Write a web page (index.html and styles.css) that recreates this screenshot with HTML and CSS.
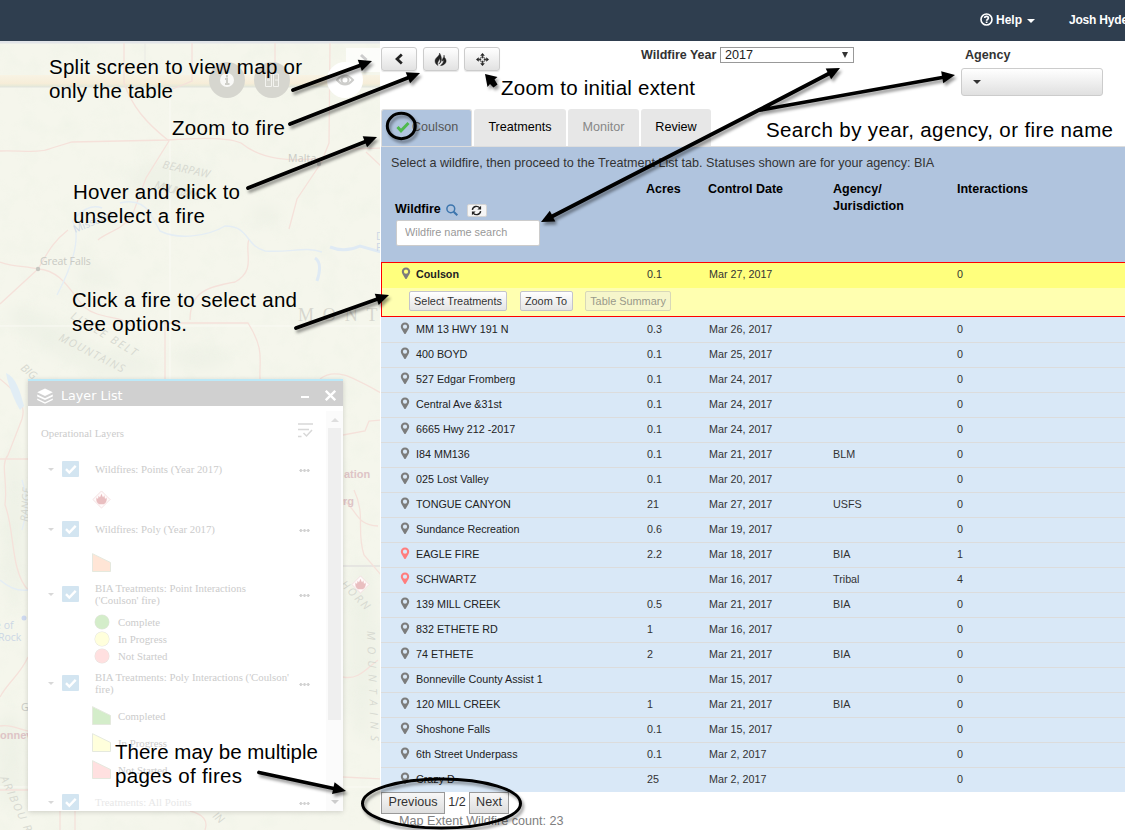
FILE: index.html
```html
<!DOCTYPE html>
<html lang="en">
<head>
<meta charset="utf-8">
<title>Wildfire Treatments</title>
<link rel="stylesheet" href="styles.css">
</head>
<body>
<svg class="defs" width="0" height="0" aria-hidden="true">
  <symbol id="pin" viewBox="0 0 10 13"><path fill="currentColor" fill-rule="evenodd" d="M5 .5C2.500.500.8 2.300.8 4.500c0 1 .300 1.700.7 2.500L4.300 11.700q.7.800 1.400 0L8.500 7c.4-.8.7-1.500.7-2.500C9.200 2.300 7.500.5 5 .5zM5 2.600a2.100 2.100 0 1 1 0 4.200 2.100 2.100 0 0 1 0-4.200z"/></symbol>
  <symbol id="check" viewBox="0 0 17 16"><rect width="17" height="16" rx="1" fill="#d3e5f1"/><path d="M4 8.200l3.300 3.300L13.700 4.900" fill="none" stroke="#fff" stroke-width="2.400"/></symbol>
  <symbol id="flame" viewBox="0 0 20 20"><path d="M10 1l9 9-9 9-9-9z" fill="#fffafa" stroke="#f3dfe0"/><path d="M7.500 15C4.500 13.500 4.200 10.500 4.800 8l1.500 1.600L7 6l1.400 2L9.900 4l1.700 4 1.400-2.500.7 4 1.600-1.500C16 11 15.200 13.500 12.500 15z" fill="#e9bec0"/></symbol>
  <symbol id="poly" viewBox="0 0 20 20"><path d="M.5.700L19.500 10v9.500H.500z" fill="currentColor" stroke="#e4e8dd"/></symbol>
</svg>

<header class="topbar">
  <a class="nav-item help">
    <svg width="13" height="13" viewBox="0 0 13 13"><circle cx="6.500" cy="6.500" r="5.500" fill="none" stroke="#fff" stroke-width="1.600"/><path d="M4.700 5.100c0-2.400 3.700-2.200 3.700 0 0 1.400-1.800 1.300-1.800 2.700M6.600 8.600v1.500" fill="none" stroke="#fff" stroke-width="1.700"/></svg>
    <span class="t-help">Help</span><i class="caret"></i>
  </a>
  <a class="nav-item user">Josh Hyde</a>
</header>

<main class="split">
  <section class="map">
    <svg class="basemap" width="381" height="789" viewBox="0 41 381 789">
      <defs>
        <filter id="relief" x="0" y="0" width="100%" height="100%"><feTurbulence type="fractalNoise" baseFrequency=".05" numOctaves="4" seed="8"/><feColorMatrix values="0 0 0 0 .82  0 0 0 0 .87  0 0 0 0 .77  0 0 2.200 0 -.95"/></filter>
        <filter id="soft"><feGaussianBlur stdDeviation="7"/></filter>
        <linearGradient id="band" x2="0" y2="1"><stop offset="0" stop-color="#f8f3e4"/><stop offset=".7" stop-color="#f6edd8"/><stop offset="1" stop-color="#e2e8d8"/></linearGradient>
      </defs>
      <rect y="41" width="381" height="789" fill="#f5f6ec"/>
      <g fill="#eff2e7" filter="url(#soft)">
        <ellipse cx="95" cy="275" rx="20" ry="9"/><ellipse cx="50" cy="335" rx="48" ry="16" transform="rotate(30 50 335)"/><ellipse cx="120" cy="365" rx="38" ry="12"/><ellipse cx="200" cy="358" rx="28" ry="12"/><ellipse cx="265" cy="215" rx="15" ry="10"/><ellipse cx="14" cy="530" rx="14" ry="80"/><ellipse cx="362" cy="650" rx="16" ry="90"/><ellipse cx="10" cy="760" rx="15" ry="50"/><ellipse cx="170" cy="180" rx="40" ry="20"/>
      </g>
      <rect y="41" width="381" height="789" filter="url(#relief)" opacity=".28"/>
      <rect y="41" width="381" height="2.500" fill="#e1e4e8"/>
      <rect y="75" width="381" height="12" fill="url(#band)"/>
      <path d="M0 87H381" stroke="#e2e4de"/>
      <path d="M145 43v32" fill="none" stroke="#e9e9e4"/>
      <g fill="none" stroke="#fafaf4"><path d="M170 87v293M0 326h381M0 787h28M343 787h38"/></g>
      <path d="M343 566h38" stroke="#dad7d9"/>
      <g fill="none" stroke="#f5e1da" stroke-width="1.300">
        <path d="M0 151C20 150 38 154 52 148L72 142 168 140C205 137 230 138 241 143 262 160 290 162 323 158L350 149 381 148"/>
        <path d="M124 43v40C132 106 145 122 169 141L146 178 132 216C122 230 105 233 98 240M275 43v34M330 43l-1 100-8 20-24 36-8 30M170 90l22-9V43M381 166l-15-14"/>
        <path d="M0 262C14 267 25 266 38 269 50 248 55 240 68 230M38 269L0 304M38 269C60 270 70 290 84 307 100 320 122 315 132 326M165 379v-56h83C265 350 259 360 260 379M190 320c0-30 20-33 45-38 22-12 9-30 14-43"/>
        <path d="M0 379C20 395 26 405 22 419L8 455c-8 10 0 25-3 50C15 530 10 570 28 590M0 459h28M28 657C20 675 8 682 0 697M0 726c12-2 20 4 28 5M320 379c15-12 32-2 61 14M343 435l22-4 4-10 12-1M343 500c15 10 12 25 35 26M354 490c12 25 2 40 10 65l17 20M343 677c15 3 22-7 35-17M343 777l38 2M0 790h28M60 811v19M75 811v19M190 811q20 5 15 19"/>
      </g>
      <g fill="none" stroke="#e4edf4" stroke-width="1.400">
        <path d="M57 295C70 270 82 240 73 222M72 222c8-12 20-18 30-14M120 203q20-5 30 10l10 18c20 10 50 4 65-5 25 0 20 20 40 25 25 2 40-5 57 1M0 580q14 12 28 10M22 480q8 25 0 50"/>
      </g>
      <path d="M330 247q15 6 30-1l21 6M315 258q8 5 2 23" fill="none" stroke="#dfeaf4" stroke-width="3"/>
      <path d="M6 373c10 4 14 18 18 33l-4 4C14 400 8 385 6 373z" fill="#e1edf5"/>
      <g class="place">
        <text x="288" y="162">Malta</text><text x="40" y="265" textLength="51">Great Falls</text>
        <text x="21" y="711">G</text>
      </g>
      <circle cx="38" cy="269" r="2.200" fill="#c6c6c0"/><circle cx="319" cy="164" r="2.200" fill="#c6c6c0"/><circle cx="24" cy="618" r="2.500" fill="#cdd8ef"/>
      <g class="range">
        <text transform="translate(162 168) rotate(12)" textLength="48">BEARPAW</text>
        <text transform="translate(154 188) rotate(16)" textLength="46">MOUNTAINS</text>
        <text transform="translate(70 318) rotate(31)" textLength="75">LITTLE BELT</text>
        <text transform="translate(58 340) rotate(27)" textLength="72">MOUNTAINS</text>
        <text transform="translate(20 369) rotate(40)">BIG</text>
        <text transform="translate(28 522) rotate(-86)" textLength="34">RANGE</text>
        <text transform="translate(340 585) rotate(45)" textLength="36">HORN</text>
        <text transform="translate(367 631) rotate(88)" textLength="110">MOUNTAINS</text>
        <text transform="translate(0 778) rotate(65)" textLength="60">ARIBOU R</text>
        <text transform="translate(212 817) rotate(40)">IN</text>
      </g>
      <text class="state" x="298" y="321" textLength="100">MONTA</text>
      <g class="water"><text transform="translate(75 233) rotate(-22)">Missouri</text><text x="376" y="240">D</text><text x="376" y="251">F</text><text x="-10" y="629">ce of</text><text x="-2" y="641">Rock</text></g>
      <g class="reservation"><text x="344" y="478">ation</text><text x="343" y="505">rg</text><text x="0" y="739">onnev</text></g>
      <use href="#flame" x="351" y="575" width="19" height="19"/>
      <g>
        <circle cx="227" cy="80" r="18" fill="#d6d6cf"/><circle cx="272" cy="80" r="18" fill="#d6d6cf"/>
        <circle cx="345" cy="80" r="18" fill="#fff"/>
        <path d="M346 48h35v24h-35z" fill="#fff" opacity=".75"/>
        <circle cx="227" cy="80" r="7" fill="#f9f9f7"/><path d="M227 75v2.500M225 79h2v5M225 84h4.500" stroke="#cfcfc9" stroke-width="2" fill="none"/>
        <path d="M265.500 74h6v12.500h-6zM273.500 74h5v12.500h-5zM267 80h3M275 80h3" fill="none" stroke="#f3f3ef"/>
        <path d="M337 80q8-9 16 0q-8 9-16 0z" fill="none" stroke="#cdcdcb" stroke-width="2"/><circle cx="345" cy="80" r="3.500" fill="none" stroke="#cdcdcb" stroke-width="2"/>
        <path d="M361 55l5.500 5" fill="none" stroke="#ccc" stroke-width="3"/>
      </g>
    </svg>

    <div class="layers">
      <div class="layers-title">
        <svg width="16" height="16" viewBox="0 0 16 16"><path d="M8 .5l7.800 3.700L8 8 .2 4.200zM.2 6.600L8 10.300l7.800-3.700v1.800L8 12.100.2 8.400zM.2 10.500L8 14.200l7.800-3.700v1.600L8 15.800.2 12.100z" fill="#fff"/></svg>
        <span class="layers-name">Layer List</span>
        <i class="minimize"></i>
        <svg width="11" height="11" viewBox="0 0 11 11"><path d="M.8.800l9.400 9.400M10.200.800L.8 10.200" stroke="#fff" stroke-width="2.300"/></svg>
      </div>
      <div class="layers-body">
        <div class="layer-list">
          <div class="list-head"><span>Operational Layers</span>
            <svg width="15" height="15" viewBox="0 0 15 15"><path d="M0 1h15M0 6.500h11M0 13.500h3.500M5.500 10l3 3L14 7" fill="none" stroke="#d8d8d8" stroke-width="1.500"/></svg></div>
          <div class="layer h48"><i class="tri"></i><svg width="17" height="16"><use href="#check"/></svg><span>Wildfires: Points (Year 2017)</span><b class="dots"></b></div>
          <div class="legend fire"><svg width="19" height="19"><use href="#flame"/></svg></div>
          <div class="layer h48"><i class="tri"></i><svg width="17" height="16"><use href="#check"/></svg><span>Wildfires: Poly (Year 2017)</span><b class="dots"></b></div>
          <div class="legend single orange"><svg width="19" height="19"><use href="#poly"/></svg></div>
          <div class="layer h40"><i class="tri"></i><svg width="17" height="16"><use href="#check"/></svg><span>BIA Treatments: Point Interactions<br>('Coulson' fire)</span><b class="dots"></b></div>
          <div class="legend dot green"><i></i><span>Complete</span></div>
          <div class="legend dot yellow"><i></i><span>In Progress</span></div>
          <div class="legend dot red"><i></i><span>Not Started</span></div>
          <div class="layer h38"><i class="tri"></i><svg width="17" height="16"><use href="#check"/></svg><span>BIA Treatments: Poly Interactions ('Coulson'<br>fire)</span><b class="dots"></b></div>
          <div class="legend shape green"><svg width="19" height="19"><use href="#poly"/></svg><span>Completed</span></div>
          <div class="legend shape yellow"><svg width="19" height="19"><use href="#poly"/></svg><span>In Progress</span></div>
          <div class="legend shape red"><svg width="19" height="19"><use href="#poly"/></svg><span>Not Started</span></div>
          <div class="layer h38 faded"><i class="tri"></i><svg width="17" height="16"><use href="#check"/></svg><span>Treatments: All Points</span><b class="dots"></b></div>
        </div>
        <div class="scroll"><i class="up"></i><div class="thumb"></div><i class="down"></i></div>
      </div>
    </div>
  </section>

  <section class="panel">
    <div class="toolbar">
      <div class="buttons">
        <button class="btn"><svg width="10" height="12" viewBox="0 0 10 12"><path d="M7.800 1.500L3 6l4.800 4.500" fill="none" stroke="#222" stroke-width="2.700"/></svg></button>
        <button class="btn"><svg width="13" height="13" viewBox="0 0 13 13"><path d="M5.500 0C6 3 1 4.500 1 8c0 2.300 1.500 3.800 3 4.500C2.500 9 5.500 8 5.500 5.500c1.500 2 .8 4-.8 5.500C9 9 7.500 3 5.500 0zM10 2c.3 2.500-2.300 3.500-2 6.300.5-.3 1-.8 1-1.500 1.500 2-.8 3.700-2.500 5.900C11.500 12 14 8 10.500 4.500z" fill="#222" stroke="#222" stroke-width=".4"/></svg></button>
        <button class="btn"><svg width="13" height="13" viewBox="0 0 15 15"><path d="M7.500 0l2.700 3.200H4.800zM7.500 15l2.700-3.200H4.800zM0 7.500l3.200-2.700v5.400zM15 7.500l-3.200-2.700v5.400z" fill="#222"/><path d="M7.500 3v3M7.500 9v3M3 7.500h3M9 7.500h3" stroke="#222" stroke-width="1.500"/><circle cx="7.500" cy="7.500" r="3" fill="none" stroke="#555" stroke-width="1"/></svg></button>
      </div>
      <label class="year"><span class="t-year">Wildfire Year</span><span class="select">2017<i></i></span></label>
      <div class="agency"><span class="t-agency">Agency</span><button class="dropdown"><i class="caret dark"></i></button></div>
    </div>

    <nav class="tabs">
      <a class="tab active"><svg width="14" height="12" viewBox="0 0 14 12"><path d="M1.500 6l3.500 3.800L12.500 2" fill="none" stroke="#4fb94f" stroke-width="3"/></svg><span>Coulson</span></a>
      <a class="tab t2"><span>Treatments</span></a>
      <a class="tab t3"><span>Monitor</span></a>
      <a class="tab t4"><span>Review</span></a>
    </nav>

    <div class="intro">
      <p><span class="t-intro">Select a wildfire, then proceed to the Treatment List tab. Statuses shown are for your agency: BIA</span></p>
      <div class="cols head">
        <div class="wildfire"><div class="wf-label"><span>Wildfire</span>
          <svg class="mag" width="12" height="12" viewBox="0 0 12 12"><circle cx="4.800" cy="4.800" r="3.900" fill="none" stroke="#3c75ad" stroke-width="1.500"/><path d="M7.700 7.700L11.300 11.300" stroke="#3c75ad" stroke-width="2"/></svg>
          <button class="refresh"><svg width="11" height="11" viewBox="0 0 12 12"><path d="M1.500 5.300C2 1.300 7 .3 9.500 3M10.500 6.700C10 10.700 5 11.700 2.500 9" fill="none" stroke="#222" stroke-width="1.500"/><path d="M11 .8v4H7zM1 11.200v-4h4z" fill="#222"/></svg></button></div>
          <input class="search" placeholder="Wildfire name search"></div>
        <span>Acres</span><span>Control Date</span><span class="nudge">Agency/<br>Jurisdiction</span><span class="nudge">Interactions</span>
      </div>
    </div>

    <div class="selected">
      <div class="cols row first"><span class="name"><svg width="10" height="13"><use href="#pin"/></svg><b>Coulson</b></span><span>0.1</span><span>Mar 27, 2017</span><span></span><span>0</span></div>
      <div class="actions"><button class="a1">Select Treatments</button><button class="a2">Zoom To</button><button class="a3" disabled>Table Summary</button></div>
    </div>

    <div class="rows">
      <div class="cols row"><span class="name"><svg width="10" height="13"><use href="#pin"/></svg>MM 13 HWY 191 N</span><span>0.3</span><span>Mar 26, 2017</span><span></span><span>0</span></div>
      <div class="cols row"><span class="name"><svg width="10" height="13"><use href="#pin"/></svg>400 BOYD</span><span>0.1</span><span>Mar 25, 2017</span><span></span><span>0</span></div>
      <div class="cols row"><span class="name"><svg width="10" height="13"><use href="#pin"/></svg>527 Edgar Fromberg</span><span>0.1</span><span>Mar 24, 2017</span><span></span><span>0</span></div>
      <div class="cols row"><span class="name"><svg width="10" height="13"><use href="#pin"/></svg>Central Ave &amp;31st</span><span>0.1</span><span>Mar 24, 2017</span><span></span><span>0</span></div>
      <div class="cols row"><span class="name"><svg width="10" height="13"><use href="#pin"/></svg>6665 Hwy 212 -2017</span><span>0.1</span><span>Mar 24, 2017</span><span></span><span>0</span></div>
      <div class="cols row"><span class="name"><svg width="10" height="13"><use href="#pin"/></svg>I84 MM136</span><span>0.1</span><span>Mar 21, 2017</span><span>BLM</span><span>0</span></div>
      <div class="cols row"><span class="name"><svg width="10" height="13"><use href="#pin"/></svg>025 Lost Valley</span><span>0.1</span><span>Mar 20, 2017</span><span></span><span>0</span></div>
      <div class="cols row"><span class="name"><svg width="10" height="13"><use href="#pin"/></svg>TONGUE CANYON</span><span>21</span><span>Mar 27, 2017</span><span>USFS</span><span>0</span></div>
      <div class="cols row"><span class="name"><svg width="10" height="13"><use href="#pin"/></svg>Sundance Recreation</span><span>0.6</span><span>Mar 19, 2017</span><span></span><span>0</span></div>
      <div class="cols row alert"><span class="name"><svg width="10" height="13"><use href="#pin"/></svg>EAGLE FIRE</span><span>2.2</span><span>Mar 18, 2017</span><span>BIA</span><span>1</span></div>
      <div class="cols row alert"><span class="name"><svg width="10" height="13"><use href="#pin"/></svg>SCHWARTZ</span><span></span><span>Mar 16, 2017</span><span>Tribal</span><span>4</span></div>
      <div class="cols row"><span class="name"><svg width="10" height="13"><use href="#pin"/></svg>139 MILL CREEK</span><span>0.5</span><span>Mar 21, 2017</span><span>BIA</span><span>0</span></div>
      <div class="cols row"><span class="name"><svg width="10" height="13"><use href="#pin"/></svg>832 ETHETE RD</span><span>1</span><span>Mar 16, 2017</span><span></span><span>0</span></div>
      <div class="cols row"><span class="name"><svg width="10" height="13"><use href="#pin"/></svg>74 ETHETE</span><span>2</span><span>Mar 21, 2017</span><span>BIA</span><span>0</span></div>
      <div class="cols row"><span class="name"><svg width="10" height="13"><use href="#pin"/></svg>Bonneville County Assist 1</span><span></span><span>Mar 15, 2017</span><span></span><span>0</span></div>
      <div class="cols row"><span class="name"><svg width="10" height="13"><use href="#pin"/></svg>120 MILL CREEK</span><span>1</span><span>Mar 21, 2017</span><span>BIA</span><span>0</span></div>
      <div class="cols row"><span class="name"><svg width="10" height="13"><use href="#pin"/></svg>Shoshone Falls</span><span>0.1</span><span>Mar 15, 2017</span><span></span><span>0</span></div>
      <div class="cols row"><span class="name"><svg width="10" height="13"><use href="#pin"/></svg>6th Street Underpass</span><span>0.1</span><span>Mar 2, 2017</span><span></span><span>0</span></div>
      <div class="cols row"><span class="name"><svg width="10" height="13"><use href="#pin"/></svg>Crazy D</span><span>25</span><span>Mar 2, 2017</span><span></span><span>0</span></div>
    </div>

    <div class="pager"><button class="p1">Previous</button><span>1/2</span><button class="p2">Next</button></div>
    <div class="count">Map Extent Wildfire count: 23</div>
  </section>
</main>

<svg class="notes" width="1125" height="830" viewBox="0 0 1125 830">
  <defs>
    <path id="head" d="M-13 -6L0 0-13 6z"/>
    <filter id="shadow" x="-10%" y="-10%" width="120%" height="120%"><feDropShadow dx="2" dy="3" stdDeviation="1.500" flood-color="#000" flood-opacity=".4"/></filter>
  </defs>
  <g class="arrows" filter="url(#shadow)">
    <path class="cap" d="M293 90L362 64.700M290 124L410 77M248 188L367 141M296 328L379 298.500M758 110.500L831 72.500M758 110.500L945 77M758 110.500L550 217.500M259 772.500L336 789"/>
    <g class="tips">
      <use href="#head" transform="translate(372 61) rotate(-20)"/>
      <use href="#head" transform="translate(420 73) rotate(-21.400)"/>
      <use href="#head" transform="translate(377 137) rotate(-21.400)"/>
      <use href="#head" transform="translate(389 295) rotate(-19.300)"/>
      <use href="#head" transform="translate(840 68) rotate(-27)"/>
      <use href="#head" transform="translate(955 75) rotate(-10)"/>
      <use href="#head" transform="translate(541 222) rotate(152.800)"/>
      <use href="#head" transform="translate(346 791) rotate(12.300)"/>
      <path d="M485 74l12.500 3-3 2.500 3 5-4 3-3.500-3.500-2.500 3z"/>
    </g>
    <ellipse cx="401.300" cy="126" rx="14" ry="12.700"/>
    <ellipse cx="441.500" cy="803.500" rx="79" ry="24.500"/>
  </g>
  <g class="captions">
    <text x="49" y="74" textLength="253">Split screen to view map or</text>
    <text x="49" y="98" textLength="124">only the table</text>
    <text x="172" y="135" textLength="113">Zoom to fire</text>
    <text x="73" y="199" textLength="167">Hover and click to</text>
    <text x="73" y="223" textLength="132">unselect a fire</text>
    <text x="72" y="307" textLength="225">Click a fire to select and</text>
    <text x="72" y="331" textLength="115">see options.</text>
    <text x="501" y="95" textLength="194">Zoom to initial extent</text>
    <text x="766" y="137" textLength="347">Search by year, agency, or fire name</text>
    <text x="115" y="759" textLength="203">There may be multiple</text>
    <text x="115" y="783" textLength="127">pages of fires</text>
  </g>
</svg>
</body>
</html>
```
FILE: styles.css
```css
* { box-sizing: border-box; }
body { margin: 0; width: 1125px; height: 830px; overflow: hidden; position: relative; background: #fff; color: #333; font: 12.600px "Liberation Sans", Arial, sans-serif; }
button, input { font-family: inherit; margin: 0; padding: 0; }
svg { flex: none; display: block; }
.defs { position: absolute; }

.topbar { height: 41px; background: #2f3e4f; color: #fff; display: flex; align-items: center; padding: 0 0 2px 980px; font-size: 12px; font-weight: bold; white-space: nowrap; overflow: hidden; }
.nav-item { display: flex; align-items: center; flex: none; }
.user { letter-spacing: -.2px; }
.help { width: 89px; gap: 3px; }
.caret { border: 4px solid transparent; border-top-color: #fff; border-bottom: 0; margin: 2px 0 0 2px; }
.caret.dark { border-top-color: #333; margin: 0; }

.split { display: flex; height: 789px; }
.map { width: 381px; flex: none; position: relative; overflow: hidden; border-right: 1px solid #fff; }
.place text { font: 10.500px "Open Sans", sans-serif; fill: #c9cac4; letter-spacing: .2px; }
.range text { font: italic 11px "Open Sans", sans-serif; fill: #d7d9d1; }
.state { font: 18px "Liberation Serif", serif; fill: #d7d7cf; }
.water text { font: 10.500px "Open Sans", sans-serif; fill: #ccd7e5; }
.reservation text { font: bold 11px "Liberation Sans", sans-serif; fill: #dec4c6; }

.layers { position: absolute; left: 28px; top: 338px; width: 315px; height: 432px; background: #fff; box-shadow: 0 1px 5px rgba(0,0,0,.16); display: flex; flex-direction: column; overflow: hidden; }
.layers-title { height: 27px; flex: none; background: #d0d0d0; border-top: 2px solid #bce9f8; display: flex; align-items: center; padding: 4px 7px 0 9px; color: #fff; }
.layers-name { font: 12.700px "DejaVu Sans", sans-serif; margin-left: 8px; flex: 1; }
.minimize { width: 8px; height: 2px; background: #fff; margin: 2px 16px 0 0; }
.layers-body { display: flex; height: 405px; }
.layer-list { width: 298px; padding-top: 15px; font: 10.800px/12px "Liberation Serif", serif; color: #ccc; }
.list-head { height: 24px; display: flex; align-items: center; justify-content: space-between; padding: 0 13px; }
.list-head svg { margin-top: -5px; }
.layer { display: flex; align-items: center; padding-left: 20px; white-space: nowrap; }
.layer span { width: 210px; margin-left: 16px; }
.h48 { height: 48px; } .h40 { height: 40px; padding-top: 2px; } .h38 { height: 38px; }
.faded span { color: #e8e8e8; }
.tri { border: 3px solid transparent; border-top-color: #d8d8d8; border-bottom: 0; margin-right: 8px; }
.dots { width: 11px; height: 3px; margin-top: 2px; margin-left: -6px; background: radial-gradient(circle, #d2d2d2 1.300px, transparent 1.700px) 0 0 / 3.700px 3px; }
.legend { display: flex; align-items: center; padding-left: 64px; }
.legend span { margin-left: 7px; color: #ccc; }
.fire { height: 12px; }
.single { height: 20px; align-items: flex-start; }
.dot { height: 17px; padding-left: 67px; }
.dot i { width: 14px; height: 14px; border-radius: 50%; background: currentColor; box-shadow: 0 0 0 .500px #e5e5e0; }
.dot span { margin-left: 9px; }
.shape { height: 27px; }
.orange { color: #ffe5d6; } .green { color: #d4edca; } .yellow { color: #ffffdc; } .red { color: #ffe0e0; }
.scroll { width: 17px; background: #fbfbfb; margin-top: 5px; display: flex; flex-direction: column; align-items: center; padding-top: 7px; }
.up { border: 4px solid transparent; border-bottom-color: #dedede; border-top: 0; }
.thumb { width: 13px; height: 292px; background: #efefef; margin-top: 6px; }
.down { border: 4px solid transparent; border-top-color: #ccc; border-bottom: 0; margin-top: 80px; }

.panel { flex: 1; min-width: 0; background: #fff; }
.toolbar { height: 68px; display: flex; align-items: flex-start; padding-top: 6px; }
.buttons { display: flex; gap: 5.500px; width: 260px; }
.btn { width: 36px; height: 24px; border: 1px solid #ccc; border-radius: 3px; background: linear-gradient(#fff, #e2e2e2); display: flex; align-items: center; justify-content: center; box-shadow: 0 1px 1px rgba(0,0,0,.1); }
.year { display: flex; width: 320px; align-items: center; font-weight: bold; font-size: 12.500px; height: 16px; gap: 3px; }
.t-year { width: 76px; white-space: nowrap; }
.select { width: 134px; height: 16px; border: 1px solid #999; font-weight: normal; font-size: 12.600px; display: flex; align-items: center; justify-content: space-between; padding: 0 5px 0 4px; color: #222; }
.select i { border: 3.500px solid transparent; border-top: 6px solid #333; border-bottom: 0; }
.agency { display: flex; flex-direction: column; font-weight: bold; }
.t-agency { line-height: 16px; padding-left: 4px; height: 21px; font-size: 12.600px; }
.dropdown { width: 142px; height: 28px; border: 1px solid #ccc; border-radius: 3px; background: linear-gradient(#fff, #e0e0e0); padding-left: 11px; display: flex; align-items: center; }

.tabs { height: 38px; display: flex; gap: 2px; border-bottom: 1px solid #ddd; }
.tab { height: 37px; border-radius: 3px 3px 0 0; background: #e7e7e7; color: #000; display: flex; align-items: center; justify-content: center; padding-bottom: 2px; }
.tab.active { width: 91px; background: #b0c4de; color: #555; justify-content: flex-start; padding-left: 14px; gap: 2px; border: 1px solid #ddd; border-bottom: 0; }
.t2 { width: 92px; } .t3 { width: 71px; color: #888; } .t4 { width: 70px; }

.intro { height: 115px; background: #b0c4de; padding: 8px 0 0 10px; }
.intro p { margin: 0; height: 18px; line-height: 17px; white-space: nowrap; }
.cols { display: grid; grid-template-columns: 265px 62px 124px 124px 1fr; }
.head { font-weight: bold; color: #000; line-height: 17px; padding-top: 8px; margin-left: -10px; font-size: 12.500px; }
.nudge { padding-left: 1px; }
.wildfire { padding: 20px 0 0 14px; }
.wf-label { display: flex; align-items: center; height: 17px; }
.mag { margin-left: 5px; }
.refresh { width: 20px; height: 13px; margin-left: 9px; margin-top: 2px; border: 1px solid #d5d5d5; border-radius: 2px; background: #f5f5f5; display: flex; align-items: center; justify-content: center; }
.search { display: block; width: 144px; height: 26px; margin: 2px 0 0 1px; border: 1px solid #ccc; border-radius: 2px; padding: 0 8px 2px; font-size: 10.900px; background: #fff; }
.search::placeholder { color: #999; }

.selected { height: 55px; border: 1px solid red; border-right: 0; background: #ffffb0; }
.row { height: 25px; line-height: 24px; font-size: 10.750px; padding-left: 1px; color: #333; background: #d9e8f7; }
.row.first { background: #ffff7d; padding-left: 0; line-height: 23px; height: 25px; }
.name { display: flex; align-items: center; padding: 0 0 2px 18px; color: #222; height: 24px; }
.name svg { color: #7c7c7c; margin: -2px 6px 0 0; }
.alert svg { color: #ff7d7d; }
.rows .row + .row { border-top: 1px solid #dcdcdc; line-height: 23px; }
.rows .row:first-child .name { padding-bottom: 0; }
.actions { display: flex; padding: 3px 0 0 27px; gap: 12.500px; }
.actions button { height: 20px; border: 1px solid #c4c4cc; border-radius: 2px; background: linear-gradient(#fff, #e4e4e4); font-size: 10.900px; color: #333; white-space: nowrap; }
.a1 { width: 98px; } .a2 { width: 53px; } .a3 { width: 86px; }
.actions .a3 { background: #f6f6cb; color: #99998a; border-color: #d8d8b8; }
.first .name { padding: 0 0 1px 19px; }
.first .name svg { margin-right: 5px; }

.pager { display: flex; height: 22px; align-items: center; }
.pager button { height: 22px; border: 1px solid #999; background: linear-gradient(#f7f7f7, #dedede); font-size: 12.600px; color: #333; padding-bottom: 2px; }
.pager span { width: 24px; text-align: center; padding-bottom: 2px; }
.p1 { width: 64px; } .p2 { width: 40px; }
.count { padding-left: 18px; font-size: 12.600px; line-height: 15px; color: #808080; white-space: nowrap; }

.notes { position: absolute; left: 0; top: 0; pointer-events: none; }
.arrows { fill: none; stroke: #000; stroke-width: 3; }
.cap { stroke-width: 3.800; stroke-linecap: round; }
.tips { stroke: none; fill: #000; }
.captions text { font: 20.500px "Liberation Sans", Arial, sans-serif; fill: #000; }
```
